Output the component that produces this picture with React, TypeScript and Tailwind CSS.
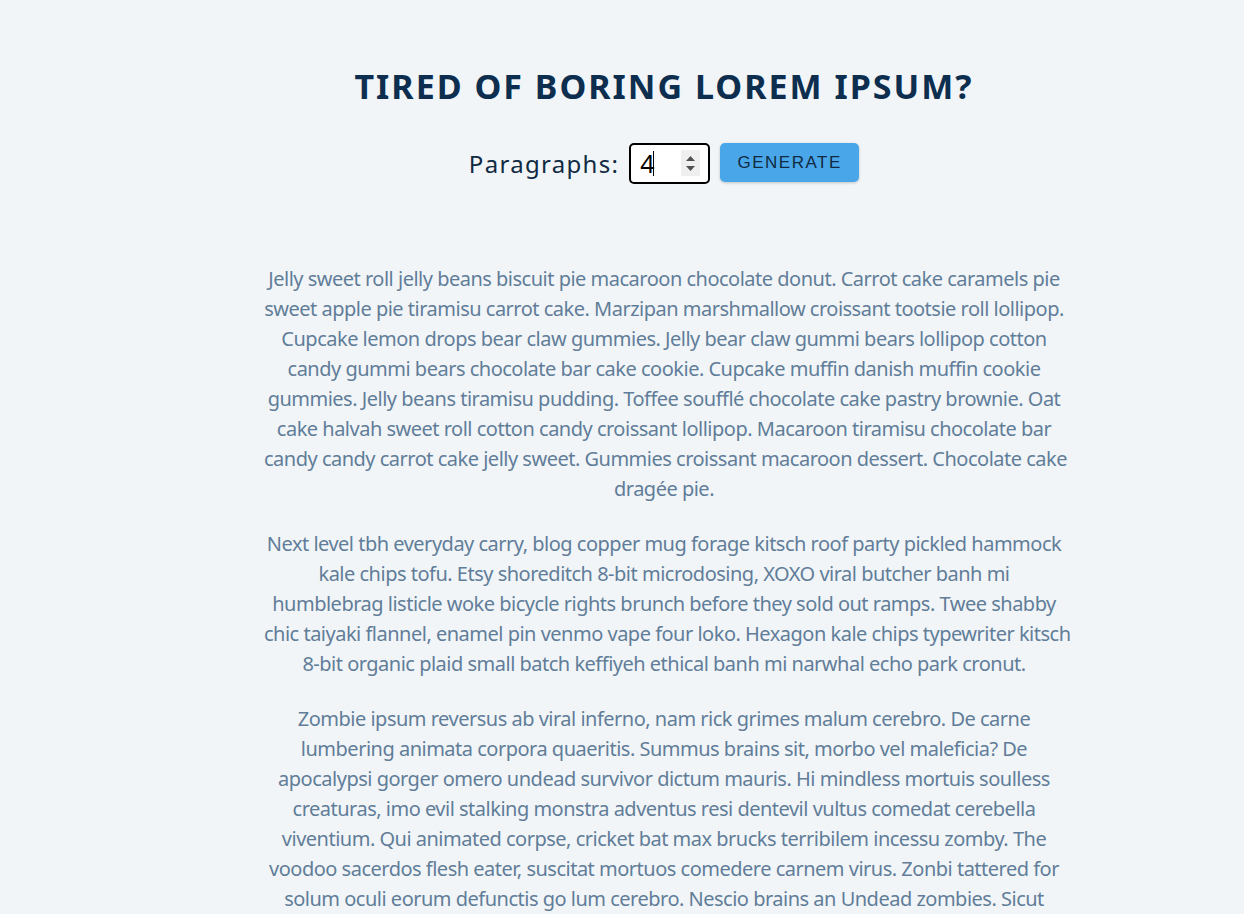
import React from "react";

const p1 = [
  "Jelly sweet roll jelly beans biscuit pie macaroon chocolate donut. Carrot cake caramels pie",
  "sweet apple pie tiramisu carrot cake. Marzipan marshmallow croissant tootsie roll lollipop.",
  "Cupcake lemon drops bear claw gummies. Jelly bear claw gummi bears lollipop cotton",
  "candy gummi bears chocolate bar cake cookie. Cupcake muffin danish muffin cookie",
  "gummies. Jelly beans tiramisu pudding. Toffee soufflé chocolate cake pastry brownie. Oat",
  "cake halvah sweet roll cotton candy croissant lollipop. Macaroon tiramisu chocolate bar",
  "candy candy carrot cake jelly sweet. Gummies croissant macaroon dessert. Chocolate cake",
  "dragée pie.",
];
const p2 = [
  "Next level tbh everyday carry, blog copper mug forage kitsch roof party pickled hammock",
  "kale chips tofu. Etsy shoreditch 8-bit microdosing, XOXO viral butcher banh mi",
  "humblebrag listicle woke bicycle rights brunch before they sold out ramps. Twee shabby",
  "chic taiyaki flannel, enamel pin venmo vape four loko. Hexagon kale chips typewriter kitsch",
  "8-bit organic plaid small batch keffiyeh ethical banh mi narwhal echo park cronut.",
];
const p3 = [
  "Zombie ipsum reversus ab viral inferno, nam rick grimes malum cerebro. De carne",
  "lumbering animata corpora quaeritis. Summus brains sit, morbo vel maleficia? De",
  "apocalypsi gorger omero undead survivor dictum mauris. Hi mindless mortuis soulless",
  "creaturas, imo evil stalking monstra adventus resi dentevil vultus comedat cerebella",
  "viventium. Qui animated corpse, cricket bat max brucks terribilem incessu zomby. The",
  "voodoo sacerdos flesh eater, suscitat mortuos comedere carnem virus. Zonbi tattered for",
  "solum oculi eorum defunctis go lum cerebro. Nescio brains an Undead zombies. Sicut",
  "malus putrid voodoo horror. Nigh tofth eliv ingdead.",
];
const p4 = [
  "Cat ipsum dolor sit amet, hiss at vacuum cleaner. Chase imaginary bugs eat grass, throw",
  "it back up. Sleep on keyboard knock dish off table head butt cant eat out of my own dish.",
];

function Para({ lines }: { lines: string[] }) {
  return (
    <p className="mb-[25px] whitespace-nowrap text-center text-[20px] leading-[30px] tracking-[-0.025em] text-[#617d98]">
      {lines.map((l, i) => (
        <React.Fragment key={i}>
          {l}
          {i < lines.length - 1 && <br />}
        </React.Fragment>
      ))}
    </p>
  );
}

export default function App() {
  return (
    <div
      className="min-h-screen w-full overflow-hidden bg-[#f1f5f8] pl-[84px]"
      style={{ fontFamily: '"Noto Sans", "Open Sans", sans-serif' }}
    >
      <section className="mx-auto flex w-[800px] flex-col items-center pt-[70px]">
        <h1 className="whitespace-nowrap text-[34px] font-bold uppercase leading-[33px] tracking-[2px] text-[#0d2e4e]">
          Tired of boring lorem ipsum?
        </h1>
        <form
          className="mt-[40px] flex h-[41px] items-center gap-[10px]"
          onSubmit={(e) => e.preventDefault()}
        >
          <label className="text-[24px] tracking-[1.3px] text-[#102a42]">Paragraphs:</label>
          <div className="relative h-[41px] w-[81px] rounded-[5px] border-2 border-black bg-white">
            <span className="absolute left-[9px] top-[3px] text-[25px] leading-[30px] text-black">4</span>
            <span className="absolute left-[22px] top-[6px] h-[25px] w-[1px] bg-black" />
            <div className="absolute left-[50px] top-[5px] flex h-[26px] w-[19px] flex-col items-center justify-center gap-[5px] bg-[#efefef]">
              <svg width="9" height="5" viewBox="0 0 9 5">
                <path d="M0 5 L4.5 0 L9 5 Z" fill="#505050" />
              </svg>
              <svg width="9" height="5" viewBox="0 0 9 5">
                <path d="M0 0 L9 0 L4.5 5 Z" fill="#505050" />
              </svg>
            </div>
          </div>
          <button
            type="submit"
            className="h-[39px] w-[139px] self-start rounded-[5px] bg-[#49a6e9] text-[17px] uppercase tracking-[1.5px] text-[#102a42] shadow-[0_1px_3px_rgba(0,0,0,0.2)]"
            style={{ fontFamily: '"Liberation Sans", Arial, sans-serif' }}
          >
            Generate
          </button>
        </form>
        <article className="mt-[80px] w-full">
          <Para lines={p1} />
          <Para lines={p2} />
          <Para lines={p3} />
          <Para lines={p4} />
        </article>
      </section>
    </div>
  );
}
